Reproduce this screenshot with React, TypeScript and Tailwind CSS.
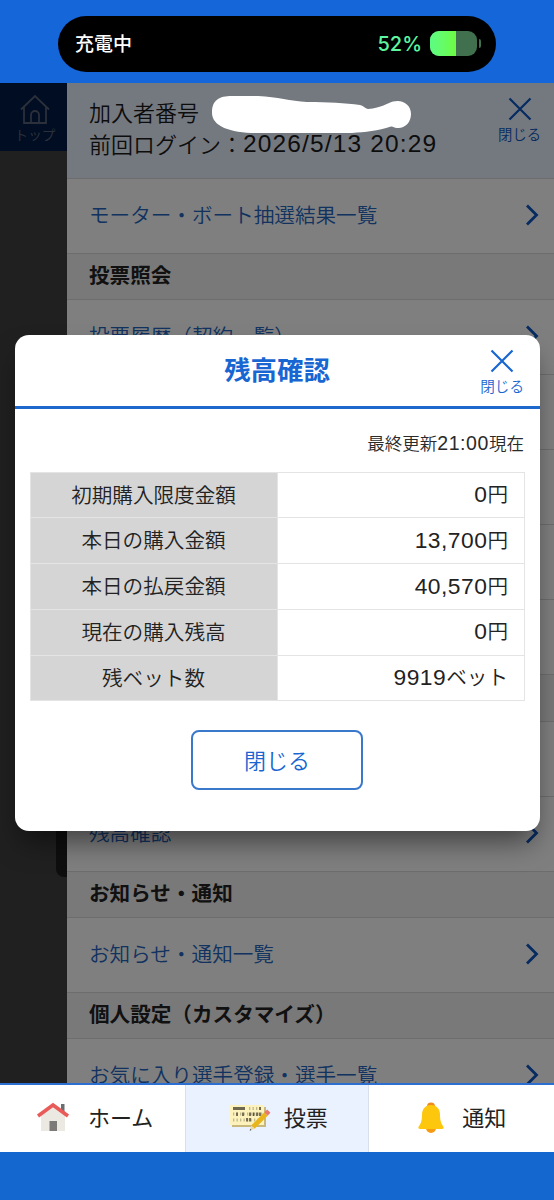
import React from 'react';

interface MenuEntry {
  label: string;
  section?: boolean;
}

const menuEntries: MenuEntry[] = [
  { label: 'モーター・ボート抽選結果一覧' },
  { label: '投票照会', section: true },
  { label: '投票履歴（契約一覧）' },
  { label: '' },
  { label: '' },
  { label: '' },
  { label: '' },
  { label: '', section: true },
  { label: '' },
  { label: '残高確認' },
  { label: 'お知らせ・通知', section: true },
  { label: 'お知らせ・通知一覧' },
  { label: '個人設定（カスタマイズ）', section: true },
  { label: 'お気に入り選手登録・選手一覧' },
];

const balanceRows = [
  { label: '初期購入限度金額', value: '0', unit: '円' },
  { label: '本日の購入金額', value: '13,700', unit: '円' },
  { label: '本日の払戻金額', value: '40,570', unit: '円' },
  { label: '現在の購入残高', value: '0', unit: '円' },
  { label: '残ベット数', value: '9919', unit: 'ベット' },
];

const CloseIcon = () => (
  <svg width="24" height="24" viewBox="0 0 24 24" fill="none" stroke="currentColor" strokeWidth="2.2">
    <path d="M1.5 1.5 22.5 22.5M22.5 1.5 1.5 22.5" />
  </svg>
);

const Chevron = () => (
  <svg width="14" height="22" viewBox="0 0 14 22" fill="none" stroke="#0b56c0" strokeWidth="2.8">
    <path d="M2 1.5 11.5 11 2 20.5" />
  </svg>
);

const StatusBar = () => (
  <div className="h-[83px] bg-[#1567d9] pt-[16px] pl-[58px]">
    <div className="flex h-[56px] w-[438px] items-center rounded-full bg-black pr-[15px] pb-[3px] pl-[17px]">
      <span className="text-[19px] leading-none font-medium text-white">充電中</span>
      <span className="mt-[2px] ml-auto font-['Inter'] text-[20px] leading-none font-medium text-[#5ff5a0]">52%</span>
      <div className="mt-[2px] ml-[8px] flex h-[25px] w-[47px] overflow-hidden rounded-[9px] bg-[#41704f]">
        <div className="w-[26px] bg-gradient-to-r from-[#5dfb84] to-[#6dfc3f]" />
      </div>
      <div className="mt-[2px] ml-[2px] h-[9px] w-[2px] rounded-r-full bg-[#41704f]" />
    </div>
  </div>
);

const SideColumn = () => (
  <div className="flex w-[67px] shrink-0 flex-col bg-[#404040]">
    <div className="flex h-[68px] flex-col items-center bg-[#001a45] pt-[11px] pl-[3px] text-[#566074]">
      <svg width="30" height="31" viewBox="0 0 30 31" fill="none" stroke="currentColor" strokeWidth="1.8">
        <path d="M1 15.5 15 2 29 15.5M4 13v16h22V13" />
        <path d="M11 29V21a4 4 0 0 1 8 0v8" />
      </svg>
      <span className="mt-[3px] text-[13.6px] leading-none">トップ</span>
    </div>
    <div className="mt-[626px] ml-auto h-[100px] w-[11px] rounded-bl-lg bg-[#1c1c1c]" />
  </div>
);

const MenuPanel = () => (
  <div className="flex min-w-0 flex-1 flex-col bg-white font-[350]">
    <div className="flex h-[95px] shrink-0 items-start justify-between bg-[#e9f1ff] pt-[12px] pr-[13px] pl-[22px]">
      <div className="text-[22px] leading-[32px] whitespace-nowrap text-[#1a1a1a]">
        <p>加入者番号</p>
        <p className="flex">
          前回ログイン：
          <span className="mt-px font-['Liberation_Sans'] text-[24.5px] tracking-[1.15px]">2026/5/13 20:29</span>
        </p>
      </div>
      <div className="mt-[2px] flex flex-col items-center text-[#0b56c0]">
        <CloseIcon />
        <span className="mt-[6px] text-[14.3px] leading-none">閉じる</span>
      </div>
    </div>
    {menuEntries.map((entry, i) =>
      entry.section ? (
        <div
          key={i}
          className="flex h-[46.3px] shrink-0 items-center border-t border-[#dadada] bg-[#f2f2f2] pb-[4px] pl-[22px] text-[20.6px] font-bold text-[#222]"
        >
          {entry.label}
        </div>
      ) : (
        <div
          key={i}
          className="flex h-[75px] shrink-0 items-center justify-between border-t border-[#dadada] pr-[15px] pb-[2px] pl-[22px] text-[20.6px] whitespace-nowrap text-[#2464c0]"
        >
          <span className="-mt-px">{entry.label}</span>
          <Chevron />
        </div>
      )
    )}
  </div>
);

// White marker stroke hiding the member number
const Redaction = () => (
  <svg className="absolute top-[12px] left-[211px]" width="201" height="40" viewBox="211 95 201 40">
    <path
      fill="#fff"
      d="M212 113C212 100 219 96 232 96H258C278 97 290 101 307 102C328 102 345 103 360 105C364 106 366 109 368 109C382 108 387 103 393 101.500C403 99 411 105 411 114C411 123 404 129 397 128C394 128 393 126 391 126.500C378 131 365 132 352 133H256C230 133 212 126 212 113Z"
    />
  </svg>
);

const BalanceModal = () => (
  <div className="absolute top-[252px] left-[14.5px] flex h-[496px] w-[525px] flex-col rounded-[14px] bg-white font-[350] shadow-[0_16px_28px_-6px_rgba(0,0,0,0.5)]">
    <div className="grid h-[74px] grid-cols-[1fr_auto_1fr] border-b-3 border-[#1c68cd]">
      <h2 className="col-start-2 pt-[14.5px] text-[26.4px] leading-[38px] font-bold text-[#1866d2]">残高確認</h2>
      <div className="flex flex-col items-center justify-self-end pt-[14px] pr-[15.5px] text-[#1866d2]">
        <CloseIcon />
        <span className="mt-[6px] text-[14.6px] leading-none">閉じる</span>
      </div>
    </div>
    <p className="mt-[21px] pr-[15.5px] text-right text-[17.5px] leading-[26px] text-[#2a2a2a]">
      最終更新<span className="font-['Liberation_Sans'] text-[19.5px] tracking-[0.6px]">21:00</span>現在
    </p>
    <table className="mt-[15.5px] ml-[15px] w-[495px] table-fixed border-collapse text-[20.6px] leading-none text-[#222]">
      <tbody>
        {balanceRows.map((row) => (
          <tr key={row.label} className="h-[45.8px]">
            <th className="border border-[#e4e4e4] bg-[#d5d5d5] p-0 pb-[2px] font-[350]">{row.label}</th>
            <td className="border border-[#e4e4e4] p-0 pr-[15.5px] pb-px text-right">
              <span className="font-['Liberation_Sans'] text-[22.8px] tracking-[0.5px]">{row.value}</span>
              {row.unit}
            </td>
          </tr>
        ))}
      </tbody>
    </table>
    <button className="mt-[29px] ml-[176.5px] h-[60px] w-[172px] rounded-[8px] border-2 border-[#3a78cc] pb-[2px] text-[22px] text-[#1866d2]">
      閉じる
    </button>
  </div>
);

const HouseIcon = () => (
  <svg width="34" height="30" viewBox="0 0 34 30">
    <path fill="#6b6d70" d="M25 2h3.500v9H25z" />
    <path fill="#ece9e3" d="M5 13 17 3l12 10v16H5z" />
    <path fill="#7b7a79" d="M13.500 19H21v10h-7.500z" />
    <path fill="none" stroke="#e95b58" strokeWidth="3.600" d="M2 14 17 3l15 11" />
  </svg>
);

const TicketIcon = () => (
  <svg width="42" height="30" viewBox="0 0 42 30">
    <path fill="#c9b87c" d="M3 5h34v20H3z" />
    <path fill="#fdf2bc" d="M1 3h34v20H1z" />
    <path fill="#6e6850" d="M4 5h12v3H4z" />
    <path stroke="#c0b78b" strokeWidth="3" strokeDasharray="1.300 2.200" fill="none" d="M4 12h30M4 18h30M20 6.500h12" />
    <path
      stroke="#5b533e"
      strokeWidth="1.600"
      fill="none"
      d="M31 5v3M8 10.500v3.500M14 10.500v3.500M21 10.500v3.500M24.500 10.500v3.500M28 10.500v3.500M31 10.500v3.500M18 16v3.500M21 16v3.500"
    />
    <path stroke="#e8b51c" strokeWidth="4.600" d="M24 25 37 12" />
    <path stroke="#e87870" strokeWidth="4.600" d="M37 12l2.800-2.800" />
    <path fill="#eed9a4" d="m22.200 23.500 3.300 3.200-4.500 1.800z" />
    <path fill="#555" d="m21.300 26.800 1.200 1.200-1.900.8z" />
  </svg>
);

const BellIcon = () => (
  <svg width="28" height="34" viewBox="0 0 28 34">
    <circle cx="14" cy="5.500" r="4" fill="#ef8b1e" />
    <circle cx="14" cy="27" r="5" fill="#f59a13" />
    <path
      fill="#fcc70c"
      d="M14 4c6 0 9 4.500 9 9.500 0 6 1 9 3 11.500 1.300 1.700.5 3-1 3H3c-1.500 0-2.300-1.300-1-3 2-2.500 3-5.500 3-11.500C5 8.500 8 4 14 4z"
    />
  </svg>
);

const BottomTabs = () => (
  <nav className="grid h-[69px] grid-cols-3 border-t-2 border-[#2d6fd0] bg-white pb-px text-[22px] leading-none text-[#222]">
    <div className="flex items-center pb-[2px] pl-[36px]">
      <HouseIcon />
      <span className="-mt-[3px] ml-[18px]">ホーム</span>
    </div>
    <div className="-mb-px flex items-center border-x border-[#d8e0ea] bg-[#e9f2fe] pb-[3px] pl-[43px]">
      <TicketIcon />
      <span className="-mt-[3px] ml-[13px]">投票</span>
    </div>
    <div className="flex items-center pl-[48px]">
      <BellIcon />
      <span className="-mt-[5px] ml-[17px]">通知</span>
    </div>
  </nav>
);

export default function App() {
  return (
    <div className="flex h-[1200px] w-[554px] flex-col overflow-hidden bg-[#1567d0] font-['Noto_Sans_CJK_JP',sans-serif]">
      <StatusBar />
      <main className="relative flex h-[1000px] overflow-hidden">
        <SideColumn />
        <MenuPanel />
        <div className="absolute inset-0 bg-black/50" />
        <Redaction />
        <BalanceModal />
      </main>
      <BottomTabs />
    </div>
  );
}
